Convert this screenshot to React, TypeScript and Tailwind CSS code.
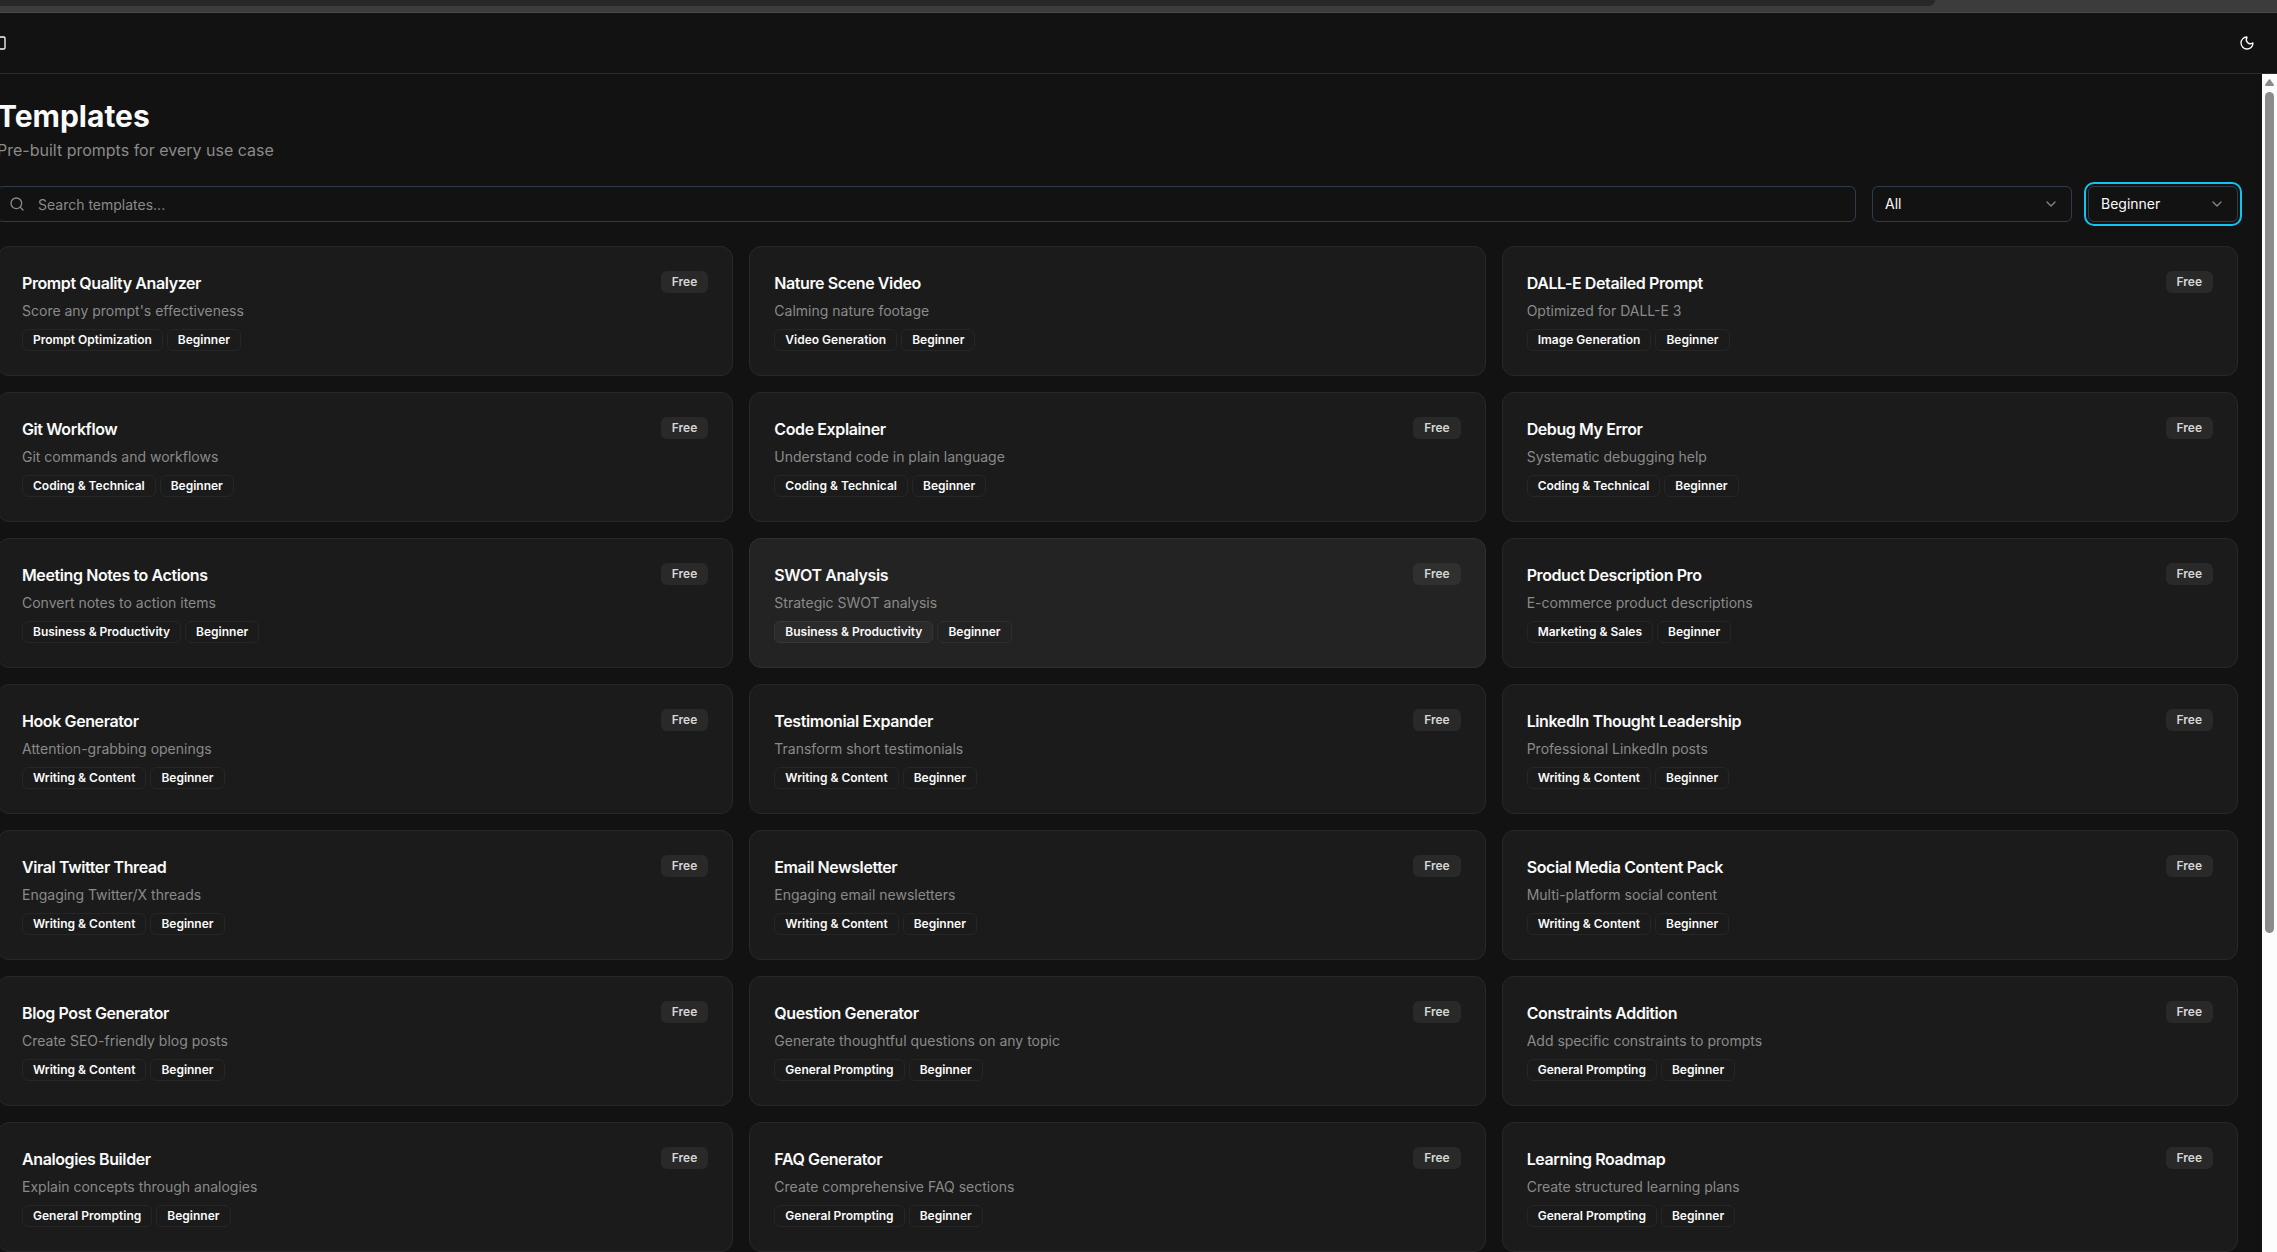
import { useState } from 'react'
import { ChevronDown, Moon, PanelLeft, Search } from 'lucide-react'

interface Template {
  title: string
  description: string
  category: string
  free?: boolean
}

const TEMPLATES: Template[] = [
  { title: 'Prompt Quality Analyzer', description: "Score any prompt's effectiveness", category: 'Prompt Optimization', free: true },
  { title: 'Nature Scene Video', description: 'Calming nature footage', category: 'Video Generation' },
  { title: 'DALL-E Detailed Prompt', description: 'Optimized for DALL-E 3', category: 'Image Generation', free: true },
  { title: 'Git Workflow', description: 'Git commands and workflows', category: 'Coding & Technical', free: true },
  { title: 'Code Explainer', description: 'Understand code in plain language', category: 'Coding & Technical', free: true },
  { title: 'Debug My Error', description: 'Systematic debugging help', category: 'Coding & Technical', free: true },
  { title: 'Meeting Notes to Actions', description: 'Convert notes to action items', category: 'Business & Productivity', free: true },
  { title: 'SWOT Analysis', description: 'Strategic SWOT analysis', category: 'Business & Productivity', free: true },
  { title: 'Product Description Pro', description: 'E-commerce product descriptions', category: 'Marketing & Sales', free: true },
  { title: 'Hook Generator', description: 'Attention-grabbing openings', category: 'Writing & Content', free: true },
  { title: 'Testimonial Expander', description: 'Transform short testimonials', category: 'Writing & Content', free: true },
  { title: 'LinkedIn Thought Leadership', description: 'Professional LinkedIn posts', category: 'Writing & Content', free: true },
  { title: 'Viral Twitter Thread', description: 'Engaging Twitter/X threads', category: 'Writing & Content', free: true },
  { title: 'Email Newsletter', description: 'Engaging email newsletters', category: 'Writing & Content', free: true },
  { title: 'Social Media Content Pack', description: 'Multi-platform social content', category: 'Writing & Content', free: true },
  { title: 'Blog Post Generator', description: 'Create SEO-friendly blog posts', category: 'Writing & Content', free: true },
  { title: 'Question Generator', description: 'Generate thoughtful questions on any topic', category: 'General Prompting', free: true },
  { title: 'Constraints Addition', description: 'Add specific constraints to prompts', category: 'General Prompting', free: true },
  { title: 'Analogies Builder', description: 'Explain concepts through analogies', category: 'General Prompting', free: true },
  { title: 'FAQ Generator', description: 'Create comprehensive FAQ sections', category: 'General Prompting', free: true },
  { title: 'Learning Roadmap', description: 'Create structured learning plans', category: 'General Prompting', free: true },
]

const CATEGORIES = ['All', ...new Set(TEMPLATES.map((t) => t.category))]
const LEVELS = ['Beginner', 'Intermediate', 'Advanced']

interface FilterSelectProps {
  label: string
  value: string
  options: string[]
  onChange: (value: string) => void
  className: string
}

function FilterSelect({ label, value, options, onChange, className }: FilterSelectProps) {
  return (
    <div className={`relative shrink-0 rounded-md ${className}`}>
      <select
        aria-label={label}
        value={value}
        onChange={(e) => onChange(e.target.value)}
        className="h-9 w-full appearance-none rounded-md border border-[#2f3d4a] bg-[#121212] px-3 text-sm text-[#fafafa] outline-none"
      >
        {options.map((option) => (
          <option key={option}>{option}</option>
        ))}
      </select>
      <ChevronDown className="pointer-events-none absolute top-2.5 right-[13px] size-4 text-[#858585]" />
    </div>
  )
}

function TemplateCard({ template, active }: { template: Template; active: boolean }) {
  return (
    <article
      className={`flex items-start justify-between rounded-xl border p-6 ${
        active ? 'border-[#303030] bg-[#232323]' : 'border-[#282828] bg-[#1b1b1b]'
      }`}
    >
      <div>
        <h2 className="text-base font-semibold tracking-tight text-[#fafafa]">{template.title}</h2>
        <p className="mt-1.5 text-sm text-[#8a8a8a]">{template.description}</p>
        <div className="mt-2 flex gap-1 text-xs font-semibold text-[#fafafa]">
          <span
            className={`rounded-md border px-2.5 py-0.5 ${
              active ? 'border-[#363636] bg-[#2b2b2b]' : 'border-[#262626]'
            }`}
          >
            {template.category}
          </span>
          <span className={`rounded-md border px-2.5 py-0.5 ${active ? 'border-[#2e2e2e]' : 'border-[#262626]'}`}>
            Beginner
          </span>
        </div>
      </div>
      {template.free && (
        <span
          className={`rounded-md border border-transparent px-2.5 py-0.5 text-xs font-semibold text-[#d6d6d6] ${
            active ? 'bg-[#303030]' : 'bg-[#292929]'
          }`}
        >
          Free
        </span>
      )}
    </article>
  )
}

function ScrollTrack() {
  return (
    <div aria-hidden="true" className="flex w-[15px] shrink-0 flex-col items-center bg-[#fcfcfc]">
      <svg viewBox="0 0 9 7" className="mt-[5px] h-[7px] w-[9px] shrink-0 fill-[#8b8b8b]">
        <path d="M3.8.6a.9.9 0 0 1 1.4 0L8.8 5.6a.9.9 0 0 1-.7 1.4H.9a.9.9 0 0 1-.7-1.4z" />
      </svg>
      <div className="mt-1.5 h-[71.4%] w-[9px] rounded-full bg-[#8b8b8b]" />
    </div>
  )
}

export default function App() {
  const [query, setQuery] = useState('')
  const [category, setCategory] = useState('All')
  const [level, setLevel] = useState('Beginner')

  const visible = TEMPLATES.filter(
    (t) =>
      (category === 'All' || t.category === category) &&
      t.title.toLowerCase().includes(query.toLowerCase()),
  )

  return (
    <div className="flex h-screen flex-col overflow-hidden bg-[#121212] font-['Inter',sans-serif] text-[#fafafa]">
      {/* browser toolbar edge */}
      <div className="h-[13px] shrink-0 border-b border-[#4a4a4a] bg-[#3c3c3c]">
        <div className="h-1.5 w-[85%] rounded-br-2xl bg-[#282828]" />
      </div>

      <header className="flex h-[61px] shrink-0 items-center justify-between border-b border-[#2d2d2d] pr-[22px]">
        <button type="button" aria-label="Toggle sidebar" className="-ml-[9px]">
          <PanelLeft className="size-4" />
        </button>
        <button type="button" aria-label="Toggle theme">
          <Moon className="size-4" />
        </button>
      </header>

      <div className="flex min-h-0 flex-1">
        <main className="-ml-[3px] min-w-0 flex-1 overflow-hidden py-6 pr-6">
          <h1 className="text-3xl font-bold">Templates</h1>
          <p className="mt-1 text-base text-[#8a8a8a]">Pre-built prompts for every use case</p>

          <div className="mt-6 flex gap-4">
            <div className="relative flex-1">
              <Search className="absolute top-2.5 left-3 size-4 text-[#8a8a8a]" />
              <input
                type="text"
                aria-label="Search templates"
                placeholder="Search templates..."
                value={query}
                onChange={(e) => setQuery(e.target.value)}
                className="h-9 w-full rounded-md border border-[#2f3d4a] bg-transparent pr-3 pl-10 text-sm outline-none placeholder:text-[#8a8a8a]"
              />
            </div>
            <FilterSelect
              label="Category"
              value={category}
              options={CATEGORIES}
              onChange={setCategory}
              className="w-[200px]"
            />
            <FilterSelect
              label="Difficulty"
              value={level}
              options={LEVELS}
              onChange={setLevel}
              className="w-[150px] outline-2 outline-offset-2 outline-[#12c4f0]"
            />
          </div>

          <div className="mt-6 grid grid-cols-3 gap-4">
            {visible.map((template) => (
              <TemplateCard
                key={template.title}
                template={template}
                active={template.title === 'SWOT Analysis'}
              />
            ))}
          </div>
        </main>
        <ScrollTrack />
      </div>
    </div>
  )
}
